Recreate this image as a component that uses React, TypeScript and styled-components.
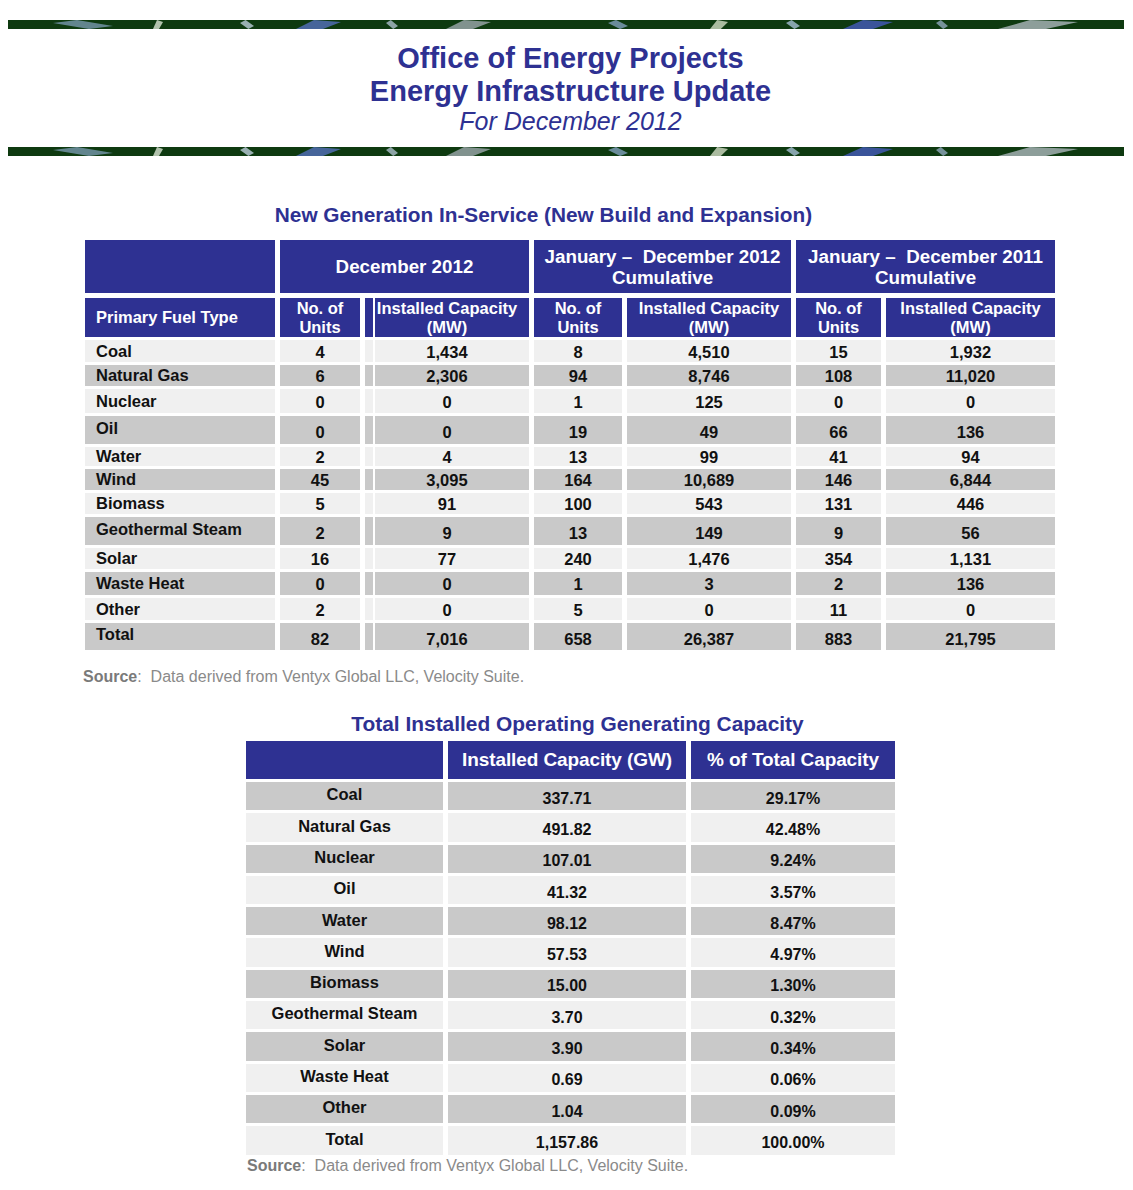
import React from 'react';
import styled, { createGlobalStyle } from 'styled-components';

const GlobalStyle = createGlobalStyle`
    body {
        margin: 0;
        background: #ffffff;
        font-family: "Liberation Sans", Arial, sans-serif;
    }
`;

const NAVY = '#2e3192';
const LIGHT = '#f0f0f0';
const GRAY = '#c9c9c9';

const Page = styled.div`
    width: 1133px;
    padding: 20px 8px 0;
    box-sizing: border-box;
`;

const Stripe = styled.svg`
    display: block;
    width: 1116px;
    height: 9px;
`;

const TitleBlock = styled.header`
    text-align: center;
    color: ${NAVY};
    padding: 13px 0 11px;
`;

const MainTitle = styled.div`
    font-size: 29px;
    font-weight: bold;
    line-height: 33px;
    margin-left: 8px;
`;

const SubTitle = styled.div`
    font-size: 25px;
    font-style: italic;
    line-height: 30px;
    margin-left: 8px;
    margin-top: -2px;
`;

// $offset moves the centred caption sideways (negative = left)
const SectionTitle = styled.h2<{ $size: number; $offset: number }>`
    margin: 0;
    text-align: center;
    color: ${NAVY};
    font-size: ${(p) => p.$size}px;
    font-weight: bold;
    line-height: 24px;
    padding-left: ${(p) => Math.max(p.$offset, 0) * 2}px;
    padding-right: ${(p) => Math.max(-p.$offset, 0) * 2}px;
`;

const FirstSection = styled.section`
    margin-top: 47px;
    padding-left: 77px;
    width: 971px;
`;

const GenGrid = styled.div`
    display: grid;
    grid-template-columns: 190px 80px 164px 88px 164px 85px 169px;
    column-gap: 5px;
    row-gap: 3px;
    margin-top: 13px;
`;

const splitLine = 'linear-gradient(to right, transparent 8px, #fff 8px, #fff 10px, transparent 10px)';

const HeadCell = styled.div<{ $span?: number; $split?: boolean; $tall?: boolean }>`
    grid-column: span ${(p) => p.$span ?? 1};
    background-color: ${NAVY};
    background-image: ${(p) => (p.$split ? splitLine : 'none')};
    color: #fff;
    font-weight: bold;
    font-size: ${(p) => (p.$tall ? 18.8 : 16.5)}px;
    line-height: ${(p) => (p.$tall ? 21 : 19)}px;
    height: ${(p) => (p.$tall ? 53 : 39)}px;
    display: flex;
    align-items: center;
    justify-content: center;
    text-align: center;
    margin-bottom: ${(p) => (p.$tall ? 2 : 0)}px;
`;

const FuelHead = styled(HeadCell)`
    justify-content: flex-start;
    padding-left: 11px;
`;

const Cell = styled.div<{ $shade: boolean; $h: number; $split?: boolean }>`
    height: ${(p) => p.$h}px;
    background-color: ${(p) => (p.$shade ? GRAY : LIGHT)};
    background-image: ${(p) => (p.$split ? splitLine : 'none')};
    display: flex;
    align-items: center;
    justify-content: center;
    font-weight: bold;
    font-size: 16.5px;
    line-height: 1;
    color: #111;
    padding-top: ${(p) => (p.$h > 24 ? 5 : 2)}px;
    box-sizing: border-box;
`;

const FuelCell = styled(Cell)`
    justify-content: flex-start;
    padding-left: 11px;
    padding-top: 0;
    padding-bottom: ${(p) => (p.$h > 24 ? 4 : 0)}px;
`;

const Source = styled.p<{ $indent: number; $top?: number }>`
    margin: ${(p) => p.$top ?? 0}px 0 0;
    padding-left: ${(p) => p.$indent}px;
    color: #8a8a8a;
    font-size: 16px;
    line-height: 18px;
    white-space: pre;

    b {
        color: #7a7a7a;
    }
`;

const SecondSection = styled.section`
    margin-top: 26px;
    padding-left: 238px;
    width: 649px;
`;

const CapGrid = styled.div`
    display: grid;
    grid-template-columns: 197px 238px 204px;
    column-gap: 5px;
    row-gap: 3px;
    margin-top: 5px;
    margin-bottom: 2px;
`;

const CapHead = styled.div`
    height: 38px;
    background: ${NAVY};
    color: #fff;
    font-weight: bold;
    font-size: 19px;
    letter-spacing: -0.1px;
    display: flex;
    align-items: center;
    justify-content: center;
`;

const CapCell = styled.div<{ $shade: boolean; $label?: boolean }>`
    height: 28.3px;
    background: ${(p) => (p.$shade ? GRAY : LIGHT)};
    display: flex;
    align-items: center;
    justify-content: center;
    font-weight: bold;
    font-size: ${(p) => (p.$label ? 16.5 : 16)}px;
    line-height: 1;
    color: #111;
    box-sizing: border-box;
    padding: ${(p) => (p.$label ? '0 0 3px' : '5px 0 0')};
`;

type GenRow = { fuel: string; h: number; v: string[] };

const genRows: GenRow[] = [
    { fuel: 'Coal', h: 22, v: ['4', '1,434', '8', '4,510', '15', '1,932'] },
    { fuel: 'Natural Gas', h: 21, v: ['6', '2,306', '94', '8,746', '108', '11,020'] },
    { fuel: 'Nuclear', h: 24, v: ['0', '0', '1', '125', '0', '0'] },
    { fuel: 'Oil', h: 28, v: ['0', '0', '19', '49', '66', '136'] },
    { fuel: 'Water', h: 19, v: ['2', '4', '13', '99', '41', '94'] },
    { fuel: 'Wind', h: 21, v: ['45', '3,095', '164', '10,689', '146', '6,844'] },
    { fuel: 'Biomass', h: 21, v: ['5', '91', '100', '543', '131', '446'] },
    { fuel: 'Geothermal Steam', h: 28, v: ['2', '9', '13', '149', '9', '56'] },
    { fuel: 'Solar', h: 21, v: ['16', '77', '240', '1,476', '354', '1,131'] },
    { fuel: 'Waste Heat', h: 23, v: ['0', '0', '1', '3', '2', '136'] },
    { fuel: 'Other', h: 22, v: ['2', '0', '5', '0', '11', '0'] },
    { fuel: 'Total', h: 27, v: ['82', '7,016', '658', '26,387', '883', '21,795'] },
];

const capRows = [
    ['Coal', '337.71', '29.17%'],
    ['Natural Gas', '491.82', '42.48%'],
    ['Nuclear', '107.01', '9.24%'],
    ['Oil', '41.32', '3.57%'],
    ['Water', '98.12', '8.47%'],
    ['Wind', '57.53', '4.97%'],
    ['Biomass', '15.00', '1.30%'],
    ['Geothermal Steam', '3.70', '0.32%'],
    ['Solar', '3.90', '0.34%'],
    ['Waste Heat', '0.69', '0.06%'],
    ['Other', '1.04', '0.09%'],
    ['Total', '1,157.86', '100.00%'],
];

// streaks of light in the green banner: [x, width, colour]
const streaks: [number, number, string][] = [
    [45, 60, '#7f9fb8'], [145, 10, '#e8f0e0'], [232, 14, '#c8d8e8'], [288, 45, '#5a74c8'],
    [378, 12, '#b8c8d8'], [438, 45, '#a8b0b8'], [600, 20, '#8aa8c8'], [702, 18, '#e0e8d0'],
    [778, 14, '#b0c8e0'], [835, 50, '#4a5ec8'], [928, 12, '#9ab0c8'], [990, 80, '#b8c0c8'],
];

const Banner: React.FC = () => (
    <Stripe viewBox="0 0 1116 9" preserveAspectRatio="none">
        <rect x="0" y="0" width="1116" height="9" fill="#0e3a10" />
        {streaks.map(([x, w, c], i) => (
            <polygon
                key={i}
                points={`${x},${i % 2 ? 9 : 3} ${x + w * 0.4},0 ${x + w},${i % 2 ? 2 : 6} ${x + w * 0.6},9`}
                fill={c}
                opacity={0.75}
            />
        ))}
    </Stripe>
);

const App: React.FC = () => {
    return (
        <>
            <GlobalStyle />
            <Page>
                <Banner />
                <TitleBlock>
                    <MainTitle>Office of Energy Projects</MainTitle>
                    <MainTitle>Energy Infrastructure Update</MainTitle>
                    <SubTitle>For December 2012</SubTitle>
                </TitleBlock>
                <Banner />

                <FirstSection>
                    <SectionTitle $size={20.8} $offset={-27}>
                        New Generation In-Service (New Build and Expansion)
                    </SectionTitle>
                    <GenGrid>
                        <HeadCell $tall />
                        <HeadCell $tall $span={2}>December 2012</HeadCell>
                        <HeadCell $tall $span={2}>January –&nbsp; December 2012<br />Cumulative</HeadCell>
                        <HeadCell $tall $span={2}>January –&nbsp; December 2011<br />Cumulative</HeadCell>

                        <FuelHead>Primary Fuel Type</FuelHead>
                        <HeadCell>No. of<br />Units</HeadCell>
                        <HeadCell $split>Installed Capacity<br />(MW)</HeadCell>
                        <HeadCell>No. of<br />Units</HeadCell>
                        <HeadCell>Installed Capacity<br />(MW)</HeadCell>
                        <HeadCell>No. of<br />Units</HeadCell>
                        <HeadCell>Installed Capacity<br />(MW)</HeadCell>

                        {genRows.map((row, r) => (
                            <React.Fragment key={row.fuel}>
                                <FuelCell $shade={r % 2 === 1} $h={row.h}>{row.fuel}</FuelCell>
                                {row.v.map((val, c) => (
                                    <Cell key={c} $shade={r % 2 === 1} $h={row.h} $split={c === 1}>
                                        {val}
                                    </Cell>
                                ))}
                            </React.Fragment>
                        ))}
                    </GenGrid>
                </FirstSection>
                <Source $indent={75} $top={18}>
                    <b>Source</b>:  Data derived from Ventyx Global LLC, Velocity Suite.
                </Source>

                <SecondSection>
                    <SectionTitle $size={20.9} $offset={7}>
                        Total Installed Operating Generating Capacity
                    </SectionTitle>
                    <CapGrid>
                        <CapHead />
                        <CapHead>Installed Capacity (GW)</CapHead>
                        <CapHead>% of Total Capacity</CapHead>
                        {capRows.map((row, r) => (
                            <React.Fragment key={row[0]}>
                                <CapCell $shade={r % 2 === 0} $label>{row[0]}</CapCell>
                                <CapCell $shade={r % 2 === 0}>{row[1]}</CapCell>
                                <CapCell $shade={r % 2 === 0}>{row[2]}</CapCell>
                            </React.Fragment>
                        ))}
                    </CapGrid>
                </SecondSection>
                <Source $indent={239}>
                    <b>Source</b>:  Data derived from Ventyx Global LLC, Velocity Suite.
                </Source>
            </Page>
        </>
    );
};

export default App;
